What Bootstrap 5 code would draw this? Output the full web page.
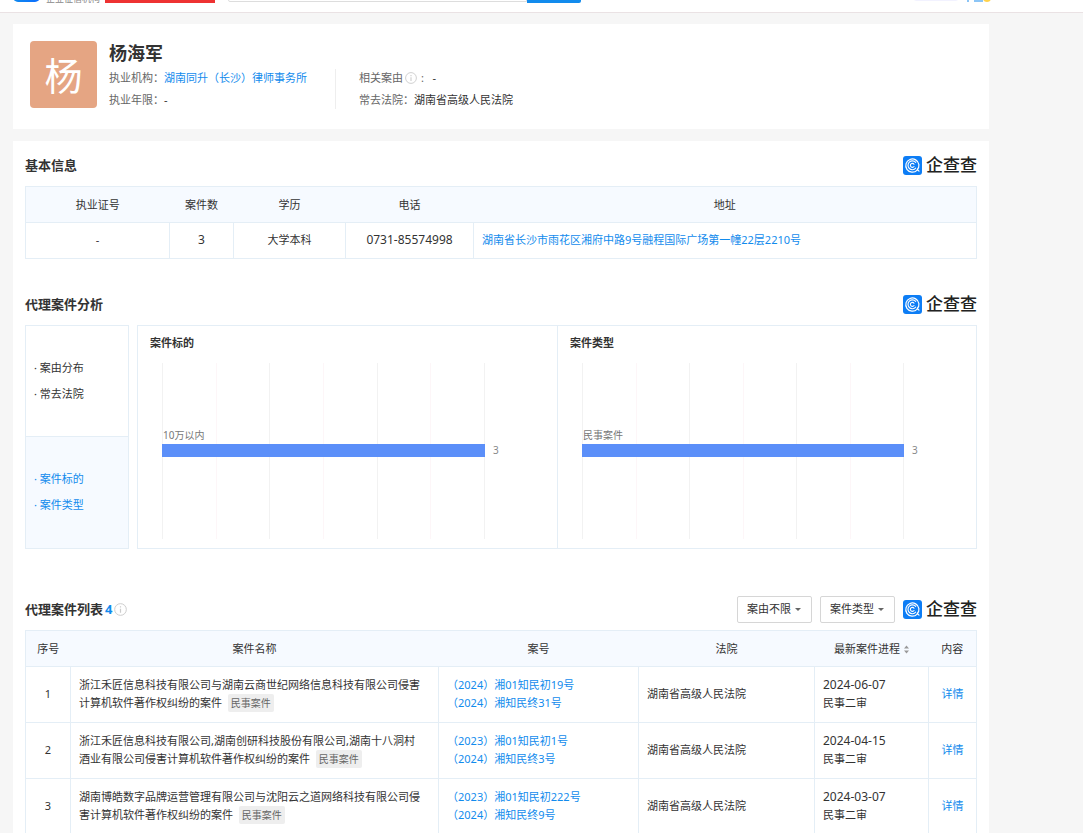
<!DOCTYPE html>
<html lang="zh-CN">
<head>
<meta charset="utf-8">
<meta name="viewport" content="width=device-width, initial-scale=1">
<title>杨海军 - 企查查</title>
<link href="https://cdn.jsdelivr.net/npm/bootstrap@5.3.0/dist/css/bootstrap.min.css" rel="stylesheet">
<style>
  :root { --link: #128bed; --line: #e4eef6; --tint: #f6faff; }
  body { background: #f6f6f6; color: #333; font: 11px/18px "Noto Sans", "Noto Sans CJK SC", sans-serif; }
  a { color: var(--link); text-decoration: none; }

  .site-bar { height: 13px; background: #fff; border-bottom: 1px solid #eae2e4; overflow: hidden; padding: 0 92px 9px 13px; }
  .site-logo { width: 27px; height: 27px; border-radius: 5px; background: linear-gradient(90deg, #128bed, #0a6cff); margin-bottom: 1px; }
  .site-note { width: 65px; padding-left: 6px; font-size: 9px; line-height: 9px; color: #888; white-space: nowrap; }
  .site-promo { width: 110px; height: 26px; background: #ee3232; margin-right: 13px; }
  .site-search { width: 299px; height: 26px; margin-bottom: 1px; border: 1px solid #ddd; border-radius: 2px 0 0 2px; }
  .site-go { width: 54px; height: 26px; border: 0; border-radius: 0 2px 2px 0; background: var(--link); }
  .site-vip { width: 46px; height: 20px; background: #f2f2ff; border-radius: 4px; margin: 0 8px 2px auto; }
  .site-user { width: 24px; height: 20px; margin-bottom: 1px; }

  .page { padding: 11px 94px 0 13px; }
  .panel { background: #fff; }
  .profile { padding: 17px 17px 18px; margin-bottom: 12px; }
  .avatar { width: 67px; height: 67px; border-radius: 4px; background: #e5a583; color: #fff; font-size: 38px; }
  .profile h1 { font-size: 18px; line-height: 22px; font-weight: 700; margin: 1px 0 3px; }
  .facts { line-height: 22px; color: #666; }
  .facts b { font-weight: 400; color: #333; }
  .facts-main { width: 226px; }
  .facts-rest { padding-left: 23px; }
  .facts-rule { width: 1px; background: #eee; margin: 2px 0; }
  .facts svg { margin: 0 4px 0 2px; vertical-align: -2px; }

  .sections { padding: 3px 12px 12px; }
  .section-head { height: 42px; gap: 8px; }
  .section-head h2 { font-size: 13px; line-height: 20px; font-weight: 700; margin: 0; }
  .section-head h2 a { margin: 0 2px; }
  .brand { font-size: 17px; line-height: 20px; font-weight: 500; color: #222; gap: 4px; }
  .gap-s { margin-top: 24px; }
  .gap-l { margin-top: 39px; }

  .grid-table { table-layout: fixed; width: 100%; border-collapse: collapse; border: 1px solid var(--line); }
  .grid-table th { height: 36px; background: var(--tint); font-weight: 400; text-align: center; padding: 0 8px; border-bottom: 1px solid var(--line); }
  .grid-table td { height: 36px; padding: 0 8px 2px; border: 1px solid var(--line); }
  .cases td { height: 56px; }
  .cases .name { padding-right: 16px; }
  .num { font-size: 12px; }
  .w-license { width: 144px; } .w-count { width: 64px; } .w-degree { width: 112px; } .w-phone { width: 128px; }
  .w-index { width: 45px; } .w-case { width: 200px; } .w-court { width: 176px; } .w-step { width: 114px; } .w-more { width: 48px; }
  .kind { display: inline-block; background: #eee; color: #666; font-size: 10px; line-height: 14px; padding: 2px 3px; border-radius: 2px; vertical-align: top; margin-left: 3px; }

  .pick { width: 75px; height: 27px; padding: 0 0 0 9px; border: 1px solid #d6d6d6; border-radius: 2px; color: #333; font-size: 11px; line-height: 18px; appearance: none;
    background: #fff url("data:image/svg+xml,%3Csvg xmlns='http://www.w3.org/2000/svg' viewBox='0 0 6 3'%3E%3Cpath fill='%23666' d='M0 0h6L3 3z'/%3E%3C/svg%3E") no-repeat right 10px center / 6px 3px; }

  .side { width: 104px; border: 1px solid var(--line); }
  .side ul { height: 110px; line-height: 26px; padding: 0 0 0 8px; margin: 0; }
  .side ul + ul { border-top: 1px solid var(--line); background: var(--tint); height: 112px; padding-bottom: 2px; }
  .side li a { color: #333; }
  .side ul + ul, .side ul + ul a { color: var(--link); }
  .charts { border: 1px solid var(--line); }
  .chart + .chart { border-left: 1px solid var(--line); }
  .chart h3 { font-size: 11px; line-height: 18px; font-weight: 700; margin: 8px 12px 11px; }
  .plot { display: grid; height: 176px; margin: 0 72px 8px 24px; }
  .plot > * { grid-area: 1 / 1; }
  .lines span { flex: 1 1 0; border-left: 1px solid #f2f2f2; }
  .lines span:nth-child(even) { border-color: #fdf6f8; }
  .lines { border-right: 1px solid #f2f2f2; }
  .bar-row { padding-top: 64px; font-size: 10px; line-height: 17px; color: #777; }
  .bar-name { padding-left: 1px; }
  .bar { height: 13px; background: #5b8ff9; }
  .bar-value { position: absolute; left: 100%; top: 0; padding-left: 8px; line-height: 13px; color: #888; }
</style>
</head>
<body>
<svg class="d-none">
  <symbol id="mark-q" viewBox="0 0 19 19">
    <rect width="19" height="19" rx="3" fill="#0d7df5"/>
    <g fill="none" stroke="#fff" stroke-linecap="round">
      <path d="M14.2 14.1A6.6 6.6 0 1 1 15.9 8.600Q16.200 11.800 14.300 13.500L16 15.200" stroke-width="1.200"/>
      <path d="M12.700 6.400A4.400 4.400 0 1 0 12.700 12.200" stroke-width="1.100"/>
      <path d="M11 8.200A2 2 0 1 0 11 10.500" stroke-width="1.100"/>
    </g>
  </symbol>
  <symbol id="mark-i" viewBox="0 0 12 12">
    <circle cx="6" cy="6" r="5.400" fill="none" stroke="#ccc" stroke-width=".9"/>
    <path d="M6 5.200V9M6 3v1.200" stroke="#ccc" stroke-width="1.100"/>
  </symbol>
</svg>

<header class="site-bar d-flex align-items-end">
  <span class="site-logo flex-shrink-0"></span>
  <span class="site-note flex-shrink-0">企业征信机构</span>
  <span class="site-promo flex-shrink-0"></span>
  <input class="site-search" type="search" aria-label="搜索">
  <button class="site-go" type="button" aria-label="查一下"></button>
  <span class="site-vip"></span>
  <svg class="site-user" viewBox="0 0 24 20"><path d="M0 0h2v20H0zM7 0h9v20H7z" fill="#8cc5f6"/><circle cx="20" cy="16" r="4" fill="#ffd24a"/><circle cx="20" cy="17" r="1" fill="#7a5600"/></svg>
</header>

<main class="page">
  <section class="panel profile d-flex align-items-start">
    <div class="avatar d-flex align-items-center justify-content-center flex-shrink-0 me-1">杨</div>
    <div class="ps-2">
      <h1>杨海军</h1>
      <div class="d-flex facts">
        <div class="facts-main">
          <div>执业机构：<a href="#">湖南同升（长沙）律师事务所</a></div>
          <div>执业年限：<b>-</b></div>
        </div>
        <div class="facts-rule"></div>
        <div class="facts-rest">
          <div>相关案由<svg width="12" height="12"><use href="#mark-i"/></svg>: &nbsp;&nbsp;<b>-</b></div>
          <div>常去法院：<b>湖南省高级人民法院</b></div>
        </div>
      </div>
    </div>
  </section>

  <div class="panel sections">
    <section>
      <div class="section-head d-flex align-items-center">
        <h2 class="me-auto">基本信息</h2>
        <span class="brand d-flex align-items-center"><svg width="19" height="19"><use href="#mark-q"/></svg>企查查</span>
      </div>
      <table class="grid-table text-center">
        <thead><tr><th class="w-license">执业证号</th><th class="w-count">案件数</th><th class="w-degree">学历</th><th class="w-phone">电话</th><th>地址</th></tr></thead>
        <tbody><tr><td>-</td><td class="num">3</td><td>大学本科</td><td class="num">0731-85574998</td><td class="text-start"><a href="#">湖南省长沙市雨花区湘府中路9号融程国际广场第一幢22层2210号</a></td></tr></tbody>
      </table>
    </section>

    <section class="gap-s">
      <div class="section-head d-flex align-items-center">
        <h2 class="me-auto">代理案件分析</h2>
        <span class="brand d-flex align-items-center"><svg width="19" height="19"><use href="#mark-q"/></svg>企查查</span>
      </div>
      <div class="d-flex gap-2">
        <nav class="side flex-shrink-0">
          <ul class="list-unstyled d-flex flex-column justify-content-center"><li>· <a href="#">案由分布</a></li><li>· <a href="#">常去法院</a></li></ul>
          <ul class="list-unstyled d-flex flex-column justify-content-center"><li>· <a href="#">案件标的</a></li><li>· <a href="#">案件类型</a></li></ul>
        </nav>
        <div class="charts d-flex flex-grow-1">
          <div class="chart w-50">
            <h3>案件标的</h3>
            <div class="plot">
              <div class="lines d-flex"><span></span><span></span><span></span><span></span><span></span><span></span></div>
              <div class="bar-row"><div class="bar-name">10万以内</div><div class="position-relative"><div class="bar" style="width:100%"></div><span class="bar-value">3</span></div></div>
            </div>
          </div>
          <div class="chart w-50">
            <h3>案件类型</h3>
            <div class="plot">
              <div class="lines d-flex"><span></span><span></span><span></span><span></span><span></span><span></span></div>
              <div class="bar-row"><div class="bar-name">民事案件</div><div class="position-relative"><div class="bar" style="width:100%"></div><span class="bar-value">3</span></div></div>
            </div>
          </div>
        </div>
      </div>
    </section>

    <section class="gap-l">
      <div class="section-head d-flex align-items-center">
        <h2 class="me-auto d-flex align-items-center">代理案件列表<a href="#">4</a><svg width="13" height="13"><use href="#mark-i"/></svg></h2>
        <select class="pick" aria-label="案由"><option>案由不限</option></select>
        <select class="pick" aria-label="案件类型"><option>案件类型</option></select>
        <span class="brand d-flex align-items-center"><svg width="19" height="19"><use href="#mark-q"/></svg>企查查</span>
      </div>
      <table class="grid-table cases">
        <thead><tr><th class="w-index">序号</th><th>案件名称</th><th class="w-case">案号</th><th class="w-court">法院</th><th class="w-step">最新案件进程<svg width="5" height="9" viewBox="0 0 5 9" class="ms-1"><path d="M0 3.500h5L2.500 .5zM0 5.500h5L2.500 8.500z" fill="#999"/></svg></th><th class="w-more">内容</th></tr></thead>
        <tbody>
          <tr><td class="text-center">1</td><td class="name">浙江禾匠信息科技有限公司与湖南云商世纪网络信息科技有限公司侵害计算机软件著作权纠纷的案件 <span class="kind">民事案件</span></td><td><a href="#">（2024）湘01知民初19号</a><br><a href="#">（2024）湘知民终31号</a></td><td>湖南省高级人民法院</td><td><span class="num">2024-06-07</span><br>民事二审</td><td class="text-center"><a href="#">详情</a></td></tr>
          <tr><td class="text-center">2</td><td class="name">浙江禾匠信息科技有限公司,湖南创研科技股份有限公司,湖南十八洞村酒业有限公司侵害计算机软件著作权纠纷的案件 <span class="kind">民事案件</span></td><td><a href="#">（2023）湘01知民初1号</a><br><a href="#">（2024）湘知民终3号</a></td><td>湖南省高级人民法院</td><td><span class="num">2024-04-15</span><br>民事二审</td><td class="text-center"><a href="#">详情</a></td></tr>
          <tr><td class="text-center">3</td><td class="name">湖南博皓数字品牌运营管理有限公司与沈阳云之道网络科技有限公司侵害计算机软件著作权纠纷的案件 <span class="kind">民事案件</span></td><td><a href="#">（2023）湘01知民初222号</a><br><a href="#">（2024）湘知民终9号</a></td><td>湖南省高级人民法院</td><td><span class="num">2024-03-07</span><br>民事二审</td><td class="text-center"><a href="#">详情</a></td></tr>
        </tbody>
      </table>
    </section>
  </div>
</main>
<script src="https://cdn.jsdelivr.net/npm/bootstrap@5.3.0/dist/js/bootstrap.bundle.min.js"></script>
</body>
</html>
